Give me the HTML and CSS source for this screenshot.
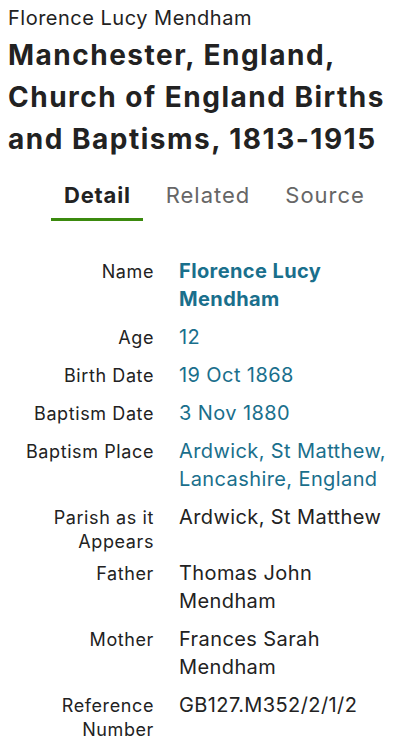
FILE: index.html
```html
<!DOCTYPE html>
<html lang="en">
<head>
<meta charset="utf-8">
<title>Florence Lucy Mendham</title>
<link rel="stylesheet" href="styles.css">
</head>
<body>
<header class="head">
  <div class="subtitle">Florence Lucy Mendham</div>
  <h1 class="title">Manchester, England, Church of England Births and Baptisms, 1813-1915</h1>
</header>
<nav class="tabs">
  <span class="tab tab-active">Detail</span>
  <span class="tab">Related</span>
  <span class="tab">Source</span>
</nav>
<dl class="facts">
  <dt class="label">Name</dt>
  <dd class="value link strong">Florence Lucy Mendham</dd>
  <dt class="label">Age</dt>
  <dd class="value link">12</dd>
  <dt class="label">Birth Date</dt>
  <dd class="value link">19 Oct 1868</dd>
  <dt class="label">Baptism Date</dt>
  <dd class="value link">3 Nov 1880</dd>
  <dt class="label">Baptism Place</dt>
  <dd class="value link">Ardwick, St Matthew, Lancashire, England</dd>
  <dt class="label">Parish as it Appears</dt>
  <dd class="value">Ardwick, St Matthew</dd>
  <dt class="label">Father</dt>
  <dd class="value">Thomas John Mendham</dd>
  <dt class="label">Mother</dt>
  <dd class="value">Frances Sarah Mendham</dd>
  <dt class="label">Reference Number</dt>
  <dd class="value">GB127.M352/2/1/2</dd>
</dl>
</body>
</html>
```
FILE: styles.css
```css
html, body {
  margin: 0;
  padding: 0;
  background: #ffffff;
}
body {
  font-family: Inter, "Liberation Sans", Arial, sans-serif;
  color: #222222;
  width: 408px;
}
.head {
  padding: 6px 8px 0 8px;
}
.subtitle {
  font-size: 20px;
  line-height: 24px;
  letter-spacing: 0.5px;
  color: #222222;
}
.title {
  margin: 4px 0 0 0;
  font-size: 28px;
  line-height: 42px;
  font-weight: 700;
  letter-spacing: 1.5px;
  color: #222222;
}
.tabs {
  display: flex;
  gap: 10px;
  margin: 22px 0 0 51px;
}
.tab {
  font-size: 22px;
  line-height: 26px;
  letter-spacing: 1px;
  padding: 0 12px 10px 13px;
  color: #666666;
  border-bottom: 3px solid transparent;
}
.tab-active {
  color: #222222;
  font-weight: 700;
  letter-spacing: 0.8px;
  border-bottom-color: #3b8a0e;
}
.facts {
  display: grid;
  grid-template-columns: 146px 1fr;
  column-gap: 25px;
  row-gap: 10px;
  align-items: baseline;
  margin: 36px 0 0 0;
  padding: 0 8px;
}
.label {
  margin: 0 0 -5px 0;
  font-size: 18px;
  line-height: 24px;
  letter-spacing: 0.6px;
  text-align: right;
  color: #222222;
}
.value {
  margin: 0;
  font-size: 20px;
  line-height: 28px;
  letter-spacing: 0.4px;
  color: #222222;
}
.link {
  color: #1a6f8c;
}
.strong {
  font-weight: 700;
}
```
